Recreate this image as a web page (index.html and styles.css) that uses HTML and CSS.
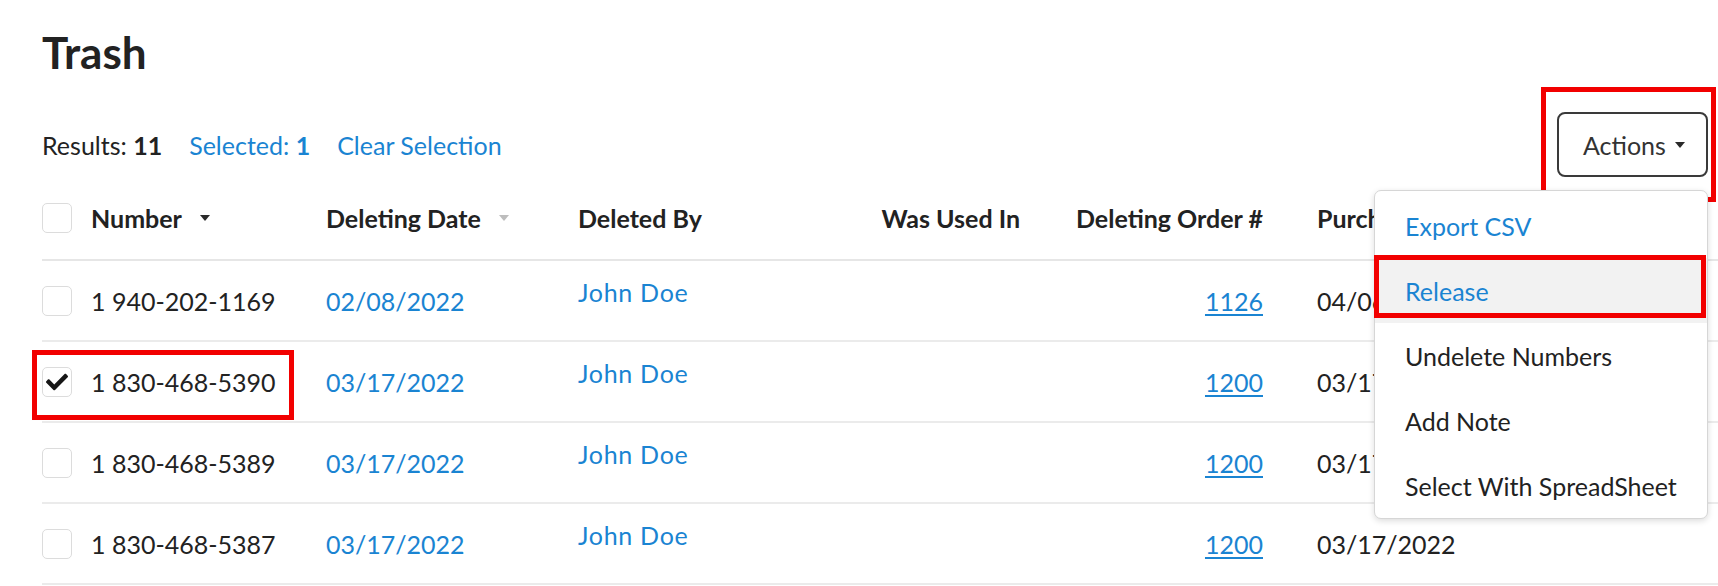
FILE: index.html
```html
<!DOCTYPE html>
<html lang="en">
<head>
<meta charset="utf-8">
<title>Trash</title>
<link rel="stylesheet" href="styles.css">
</head>
<body>
<div class="page">
  <h1 class="title">Trash</h1>

  <div class="toolbar">
    <div class="summary">
      <span class="sum-item">Results: <b>11</b></span>
      <a class="sum-item link">Selected: <b>1</b></a>
      <a class="sum-item link">Clear Selection</a>
    </div>
    <div class="actions">
      <button class="actions-btn">Actions <span class="caret dark"></span></button>
      <div class="mark mark-actions"></div>
      <div class="menu">
        <div class="menu-item link">Export CSV</div>
        <div class="menu-item link active">Release</div>
        <div class="menu-item">Undelete Numbers</div>
        <div class="menu-item">Add Note</div>
        <div class="menu-item">Select With SpreadSheet</div>
        <div class="mark mark-release"></div>
      </div>
    </div>
  </div>

  <div class="table">
    <div class="trow thead">
      <div class="cell"><span class="checkbox"></span></div>
      <div class="cell">Number <span class="caret dark sort"></span></div>
      <div class="cell">Deleting Date <span class="caret light sort"></span></div>
      <div class="cell">Deleted By</div>
      <div class="cell right">Was Used In</div>
      <div class="cell right">Deleting Order #</div>
      <div class="cell pad">Purchase Date</div>
    </div>

    <div class="trow">
      <div class="cell"><span class="checkbox"></span></div>
      <div class="cell">1 940-202-1169</div>
      <div class="cell link">02/08/2022</div>
      <div class="cell"><a class="link raised">John Doe</a></div>
      <div class="cell right"></div>
      <div class="cell right"><a class="link under">1126</a></div>
      <div class="cell pad">04/06/2022</div>
    </div>

    <div class="trow selected">
      <div class="cell"><span class="checkbox checked"><svg viewBox="0 0 512 512" class="check"><path d="M173.9 439.4l-166.4-166.4c-10-10-10-26.2 0-36.2l36.2-36.2c10-10 26.2-10 36.2 0L192 312.7 432.1 72.6c10-10 26.2-10 36.2 0l36.2 36.2c10 10 10 26.2 0 36.2l-294.4 294.4c-10 10-26.2 10-36.2 0z"/></svg></span></div>
      <div class="cell">1 830-468-5390</div>
      <div class="cell link">03/17/2022</div>
      <div class="cell"><a class="link raised">John Doe</a></div>
      <div class="cell right"></div>
      <div class="cell right"><a class="link under">1200</a></div>
      <div class="cell pad">03/17/2022</div>
      <div class="mark mark-row"></div>
    </div>

    <div class="trow">
      <div class="cell"><span class="checkbox"></span></div>
      <div class="cell">1 830-468-5389</div>
      <div class="cell link">03/17/2022</div>
      <div class="cell"><a class="link raised">John Doe</a></div>
      <div class="cell right"></div>
      <div class="cell right"><a class="link under">1200</a></div>
      <div class="cell pad">03/17/2022</div>
    </div>

    <div class="trow">
      <div class="cell"><span class="checkbox"></span></div>
      <div class="cell">1 830-468-5387</div>
      <div class="cell link">03/17/2022</div>
      <div class="cell"><a class="link raised">John Doe</a></div>
      <div class="cell right"></div>
      <div class="cell right"><a class="link under">1200</a></div>
      <div class="cell pad">03/17/2022</div>
    </div>
  </div>
</div>
</body>
</html>
```

FILE: styles.css
```css
* { box-sizing: border-box; }

html, body {
  margin: 0;
  background: #fff;
  overflow: hidden;
}

body {
  font-family: Lato, "Open Sans", sans-serif;
  color: #222;
  font-size: 25px;
}

.page {
  padding: 24px 10px 0 42px;
}

.title {
  margin: 0;
  font-size: 44px;
  line-height: 56px;
  font-weight: 700;
  color: #222;
}

.toolbar {
  margin-top: 32px;
  height: 65px;
  display: flex;
  align-items: center;
  justify-content: space-between;
}

.summary {
  display: flex;
  gap: 27px;
  line-height: 1.2;
}

.summary b { font-weight: 700; }

.link {
  color: #1a84d2;
  text-decoration: none;
}

.actions {
  position: relative;
  height: 65px;
}

.actions-btn {
  height: 65px;
  width: 151px;
  padding: 0 0 0 24px;
  display: flex;
  align-items: center;
  gap: 9px;
  font-family: inherit;
  font-size: 25px;
  color: #333;
  background: #fff;
  border: 2px solid #3a3a3a;
  border-radius: 8px;
}

.caret {
  display: inline-block;
  width: 0;
  height: 0;
  border-left: 5px solid transparent;
  border-right: 5px solid transparent;
  border-top: 6px solid #333;
}

.caret.dark { border-top-color: #2a2a2a; }
.caret.light { border-top-color: #bdbdbd; }
.caret.sort { margin-left: 18px; }

.mark {
  position: absolute;
  border: 5px solid #f20000;
  pointer-events: none;
}

.mark-actions {
  left: -16px;
  top: -25px;
  width: 175px;
  height: 115px;
}

.menu {
  position: absolute;
  top: 78px;
  right: 0;
  width: 334px;
  background: #fff;
  border: 1px solid #d6d6d6;
  border-radius: 7px;
  box-shadow: 0 2px 6px rgba(0, 0, 0, 0.14);
  padding-top: 2px;
  z-index: 5;
}

.menu-item {
  height: 65px;
  display: flex;
  align-items: center;
  padding-left: 30px;
  font-size: 25px;
  white-space: nowrap;
}

.menu-item.active { background: #f2f2f2; }

.mark-release {
  left: -1px;
  top: 64px;
  width: 332px;
  height: 63px;
}

.table {
  margin-right: -10px;
}

.trow {
  position: relative;
  display: grid;
  grid-template-columns: 49px 235px 252px 276px 193px 243px 1fr;
  align-items: center;
  height: 81px;
  border-bottom: 2px solid #ebebeb;
}

.thead {
  height: 84px;
  font-weight: 700;
  border-bottom-color: #e6e6e6;
}

.cell {
  display: flex;
  align-items: center;
  white-space: nowrap;
}

.cell.right {
  justify-content: flex-end;
  padding-right: 27px;
}

.cell.pad { padding-left: 27px; }

.checkbox {
  width: 30px;
  height: 30px;
  border: 1px solid #dcdcdc;
  border-radius: 5px;
  background: #fff;
  display: flex;
  align-items: center;
  justify-content: center;
}

.check {
  width: 22px;
  height: 22px;
  fill: #161616;
}

.raised {
  margin-bottom: 18px;
  letter-spacing: 0.7px;
}

.under {
  text-decoration: underline;
  text-decoration-thickness: 2px;
  text-underline-offset: 3px;
}

.mark-row {
  left: -10px;
  top: 8px;
  width: 262px;
  height: 70px;
}
```
